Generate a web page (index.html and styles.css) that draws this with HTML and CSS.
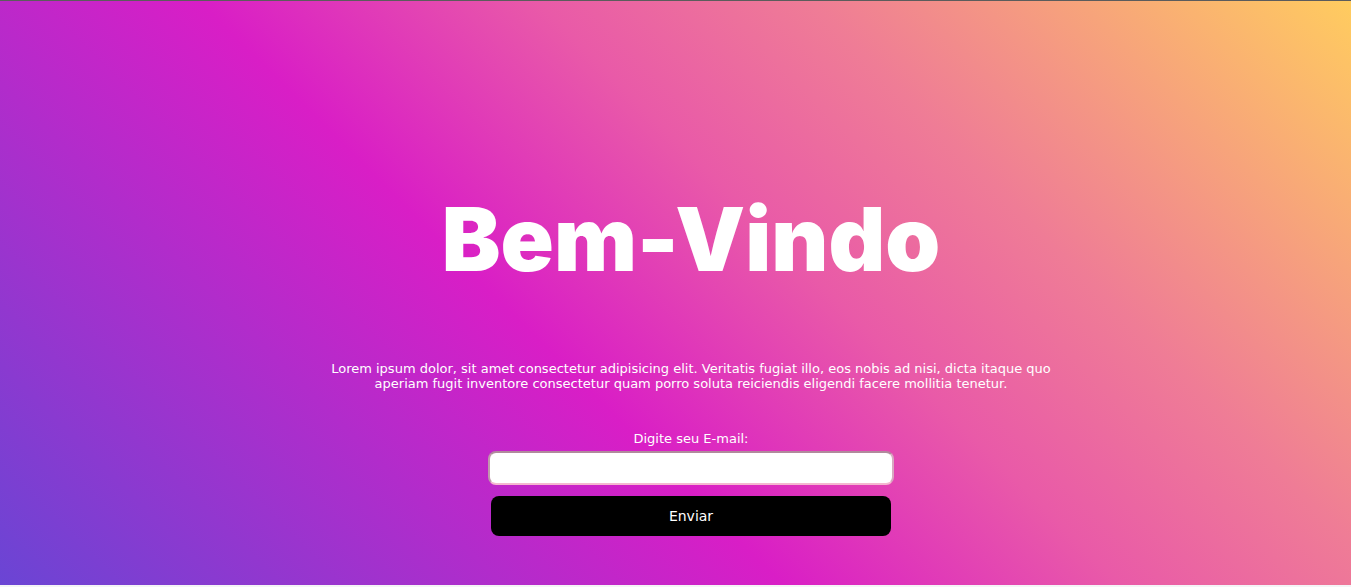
FILE: index.html
```html
<!DOCTYPE html>
<html lang="pt-BR">
<head>
<meta charset="utf-8">
<title>Bem-Vindo</title>
<link rel="stylesheet" href="styles.css">
</head>
<body>
<main class="hero">
  <h1 class="title">Bem-Vindo</h1>
  <p class="intro">Lorem ipsum dolor, sit amet consectetur adipisicing elit. Veritatis fugiat illo, eos nobis ad nisi, dicta itaque quo aperiam fugit inventore consectetur quam porro soluta reiciendis eligendi facere mollitia tenetur.</p>
  <form class="signup">
    <label class="signup-label" for="email">Digite seu E-mail:</label>
    <input class="signup-input" id="email" type="email">
    <button class="signup-button" type="button">Enviar</button>
  </form>
</main>
</body>
</html>
```
FILE: styles.css
```css
html, body {
  margin: 0;
  padding: 0;
  background: #f4f4f6;
}
body {
  font-family: "DejaVu Sans", Verdana, sans-serif;
  color: #fff;
}
.hero {
  box-sizing: border-box;
  height: 585px;
  border-top: 1px solid #5c5c5c;
  background: linear-gradient(45deg, #6a45d4 0%, #d91ec6 40.5%, #e95aa8 58%, #ef7c96 72%, #ffcc5f 100%);
  display: flex;
  flex-direction: column;
  align-items: center;
  padding-top: 178px;
  padding-left: 31px;
}
.title {
  margin: 0;
  font-family: Inter, "Noto Sans", sans-serif;
  font-weight: 900;
  font-size: 88px;
  line-height: 120px;
  letter-spacing: 0;
}
.intro {
  margin: 62px 0 0;
  width: 730px;
  text-align: center;
  font-size: 13px;
  line-height: 15px;
}
.signup {
  margin-top: 40px;
  display: flex;
  flex-direction: column;
  align-items: center;
}
.signup-label {
  font-size: 13px;
  line-height: 15px;
  margin-bottom: 5px;
}
.signup-input {
  box-sizing: border-box;
  width: 406px;
  height: 34px;
  border: 2px solid;
  border-color: #b08a9c #d8a8c0 #f4b8d0 #c098ac;
  border-radius: 8px;
  background: #fff;
  margin: 0;
}
.signup-button {
  margin-top: 11px;
  width: 400px;
  height: 40px;
  border: 0;
  border-radius: 8px;
  background: #000;
  color: #fff;
  font-family: "DejaVu Sans", Verdana, sans-serif;
  font-size: 14px;
}
```
